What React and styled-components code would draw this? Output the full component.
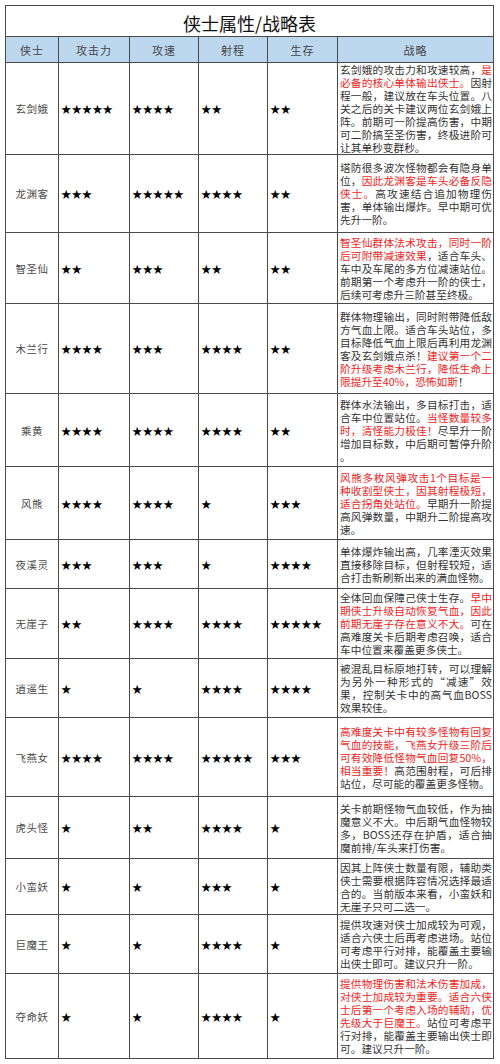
import styled, { createGlobalStyle } from "styled-components";

const GlobalStyle = createGlobalStyle`
  html, body {
    margin: 0;
    padding: 0;
    background: #fff;
  }
  body {
    font-family: "Noto Sans CJK SC", sans-serif;
  }
`;

const columns = ["侠士", "攻击力", "攻速", "射程", "生存", "战略"];

// [..] marks red text
const heroes = [
  {
    name: "玄剑娥",
    h: 91,
    stars: [5, 4, 2, 2],
    lines: [
      "玄剑娥的攻击力和攻速较高，[是]",
      "[必备的核心单体输出侠士。]因射",
      "程一般，建议放在车头位置。八",
      "关之后的关卡建议两位玄剑娥上",
      "阵。前期可一阶提高伤害，中期",
      "可二阶搞至圣伤害，终极进阶可",
      "让其单秒变群秒。",
    ],
  },
  {
    name: "龙渊客",
    h: 77,
    stars: [3, 5, 4, 2],
    lines: [
      "塔防很多波次怪物都会有隐身单",
      "位，[因此龙渊客是车头必备反隐]",
      "[侠士。]高攻速结合追加物理伤",
      "害，单体输出爆炸。早中期可优",
      "先升一阶。",
    ],
  },
  {
    name: "智圣仙",
    h: 70,
    stars: [2, 3, 2, 2],
    lines: [
      "[智圣仙群体法术攻击，同时一阶]",
      "[后可附带减速效果]，适合车头、",
      "车中及车尾的多方位减速站位。",
      "前期第一个考虑升一阶的侠士，",
      "后续可考虑升三阶甚至终极。",
    ],
  },
  {
    name: "木兰行",
    h: 89,
    stars: [4, 3, 4, 2],
    lines: [
      "群体物理输出，同时附带降低敌",
      "方气血上限。适合车头站位，多",
      "目标降低气血上限后再利用龙渊",
      "客及玄剑娥点杀！[建议第一个二]",
      "[阶升级考虑木兰行，降低生命上]",
      "[限提升至40%，恐怖如斯]！",
    ],
  },
  {
    name: "乘黄",
    h: 72,
    stars: [4, 4, 4, 2],
    lines: [
      "群体水法输出，多目标打击，适",
      "合车中位置站位。[当怪数量较多]",
      "[时，清怪能力极佳！]尽早升一阶",
      "增加目标数，中后期可暂停升阶",
      "。",
    ],
  },
  {
    name: "风熊",
    h: 72,
    stars: [4, 4, 1, 3],
    lines: [
      "[风熊多枚风弹攻击1个目标是一]",
      "[种收割型侠士，因其射程极短，]",
      "[适合拐角处站位。]早期升一阶提",
      "高风弹数量，中期升二阶提高攻",
      "速。",
    ],
  },
  {
    name: "夜溪灵",
    h: 48,
    stars: [3, 3, 1, 4],
    lines: [
      "单体爆炸输出高，几率湮灭效果",
      "直接移除目标，但射程较短，适",
      "合打击新刷新出来的满血怪物。",
    ],
  },
  {
    name: "无崖子",
    h: 69,
    stars: [2, 4, 4, 5],
    lines: [
      "全体回血保障己侠士生存。[早中]",
      "[期侠士升级自动恢复气血，因此]",
      "[前期无崖子存在意义不大。]可在",
      "高难度关卡后期考虑召唤，适合",
      "车中位置来覆盖更多侠士。",
    ],
  },
  {
    name: "逍遥生",
    h: 58,
    stars: [1, 1, 4, 4],
    lines: [
      "被混乱目标原地打转，可以理解",
      "为另外一种形式的“减速”效",
      "果，控制关卡中的高气血BOSS",
      "效果较佳。",
    ],
  },
  {
    name: "飞燕女",
    h: 78,
    stars: [4, 4, 5, 3],
    lines: [
      "[高难度关卡中有较多怪物有回复]",
      "[气血的技能，飞燕女升级三阶后]",
      "[可有效降低怪物气血回复50%，]",
      "[相当重要！]高范围射程，可后排",
      "站位，尽可能的覆盖更多怪物。",
    ],
  },
  {
    name: "虎头怪",
    h: 61,
    stars: [1, 2, 4, 1],
    lines: [
      "关卡前期怪物气血较低，作为抽",
      "魔意义不大。中后期气血怪物较",
      "多，BOSS还存在护盾，适合抽",
      "魔前排/车头来打伤害。",
    ],
  },
  {
    name: "小蛮妖",
    h: 55,
    stars: [1, 1, 3, 1],
    lines: [
      "因其上阵侠士数量有限，辅助类",
      "侠士需要根据阵容情况选择最适",
      "合的。当前版本来看，小蛮妖和",
      "无崖子只可二选一。",
    ],
  },
  {
    name: "巨魔王",
    h: 58,
    stars: [1, 1, 4, 1],
    lines: [
      "提供攻速对侠士加成较为可观，",
      "适合六侠士后再考虑进场。站位",
      "可考虑平行对排，能覆盖主要输",
      "出侠士即可。建议只升一阶。",
    ],
  },
  {
    name: "夺命妖",
    h: 84,
    stars: [1, 1, 4, 1],
    lines: [
      "[提供物理伤害和法术伤害加成，]",
      "[对侠士加成较为重要。适合六侠]",
      "[士后第一个考虑入场的辅助，优]",
      "[先级大于巨魔王。]站位可考虑平",
      "行对排，能覆盖主要输出侠士即",
      "可。建议只升一阶。",
    ],
  },
];

const renderLine = (line) =>
  line
    .split(/(\[[^\]]*\])/)
    .filter(Boolean)
    .map((part, i) =>
      part.startsWith("[") ? (
        <Red key={i}>{part.slice(1, -1)}</Red>
      ) : (
        <span key={i}>{part}</span>
      )
    );

const App = () => {
  return (
    <Page>
      <GlobalStyle />
      <Table>
        <TitleCell>侠士属性/战略表</TitleCell>
        <Row $h={25}>
          {columns.map((c) => (
            <HeadCell key={c}>{c}</HeadCell>
          ))}
        </Row>
        {heroes.map((hero) => (
          <Row key={hero.name} $h={hero.h}>
            <NameCell>{hero.name}</NameCell>
            {hero.stars.map((n, i) => (
              <StarCell key={i}>{"★".repeat(n)}</StarCell>
            ))}
            <StrategyCell>
              {hero.lines.map((line, i) => (
                <Line key={i} $last={i === hero.lines.length - 1}>
                  {renderLine(line)}
                </Line>
              ))}
            </StrategyCell>
          </Row>
        ))}
      </Table>
    </Page>
  );
};

const Page = styled.div`
  width: 500px;
  box-sizing: border-box;
  padding: 5px 0 0 5px;
`;

const Table = styled.div`
  width: 489px;
  box-sizing: border-box;
  display: flex;
  flex-direction: column;
  gap: 1px;
  padding: 1px;
  background: #4a4a4a;
`;

const TitleCell = styled.div`
  height: 30px;
  box-sizing: border-box;
  padding-top: 3px;
  background: #fff;
  display: flex;
  align-items: center;
  justify-content: center;
  font-family: "Noto Sans CJK SC", sans-serif;
  font-size: 18px;
  color: #111;
`;

const Row = styled.div`
  display: grid;
  grid-template-columns: 52px 70px 68px 68px 69px 155px;
  gap: 1px;
  height: ${(p) => p.$h}px;
`;

const HeadCell = styled.div`
  background: #bdd7ee;
  display: flex;
  align-items: center;
  justify-content: center;
  font-size: 11px;
  letter-spacing: 1px;
  color: #444;
`;

const NameCell = styled.div`
  background: #fff;
  display: flex;
  align-items: center;
  justify-content: center;
  font-size: 10.5px;
  letter-spacing: 0.5px;
  color: #4a4a4a;
`;

const StarCell = styled.div`
  background: #fff;
  display: flex;
  align-items: center;
  padding-left: 2px;
  font-family: "Noto Sans CJK SC", sans-serif;
  font-size: 10.4px;
  color: #000;
`;

const StrategyCell = styled.div`
  background: #fff;
  display: flex;
  flex-direction: column;
  justify-content: safe center;
  padding: 0 1px 0 2px;
  font-family: "Noto Sans CJK SC", sans-serif;
  font-size: 10.7px;
  line-height: 13px;
  color: #333;
  overflow: hidden;
`;

const Line = styled.span`
  display: block;
  height: 13px;
  text-align: ${(p) => (p.$last ? "left" : "justify")};
  text-align-last: ${(p) => (p.$last ? "left" : "justify")};
`;

const Red = styled.span`
  color: #f02424;
`;

export default App;
